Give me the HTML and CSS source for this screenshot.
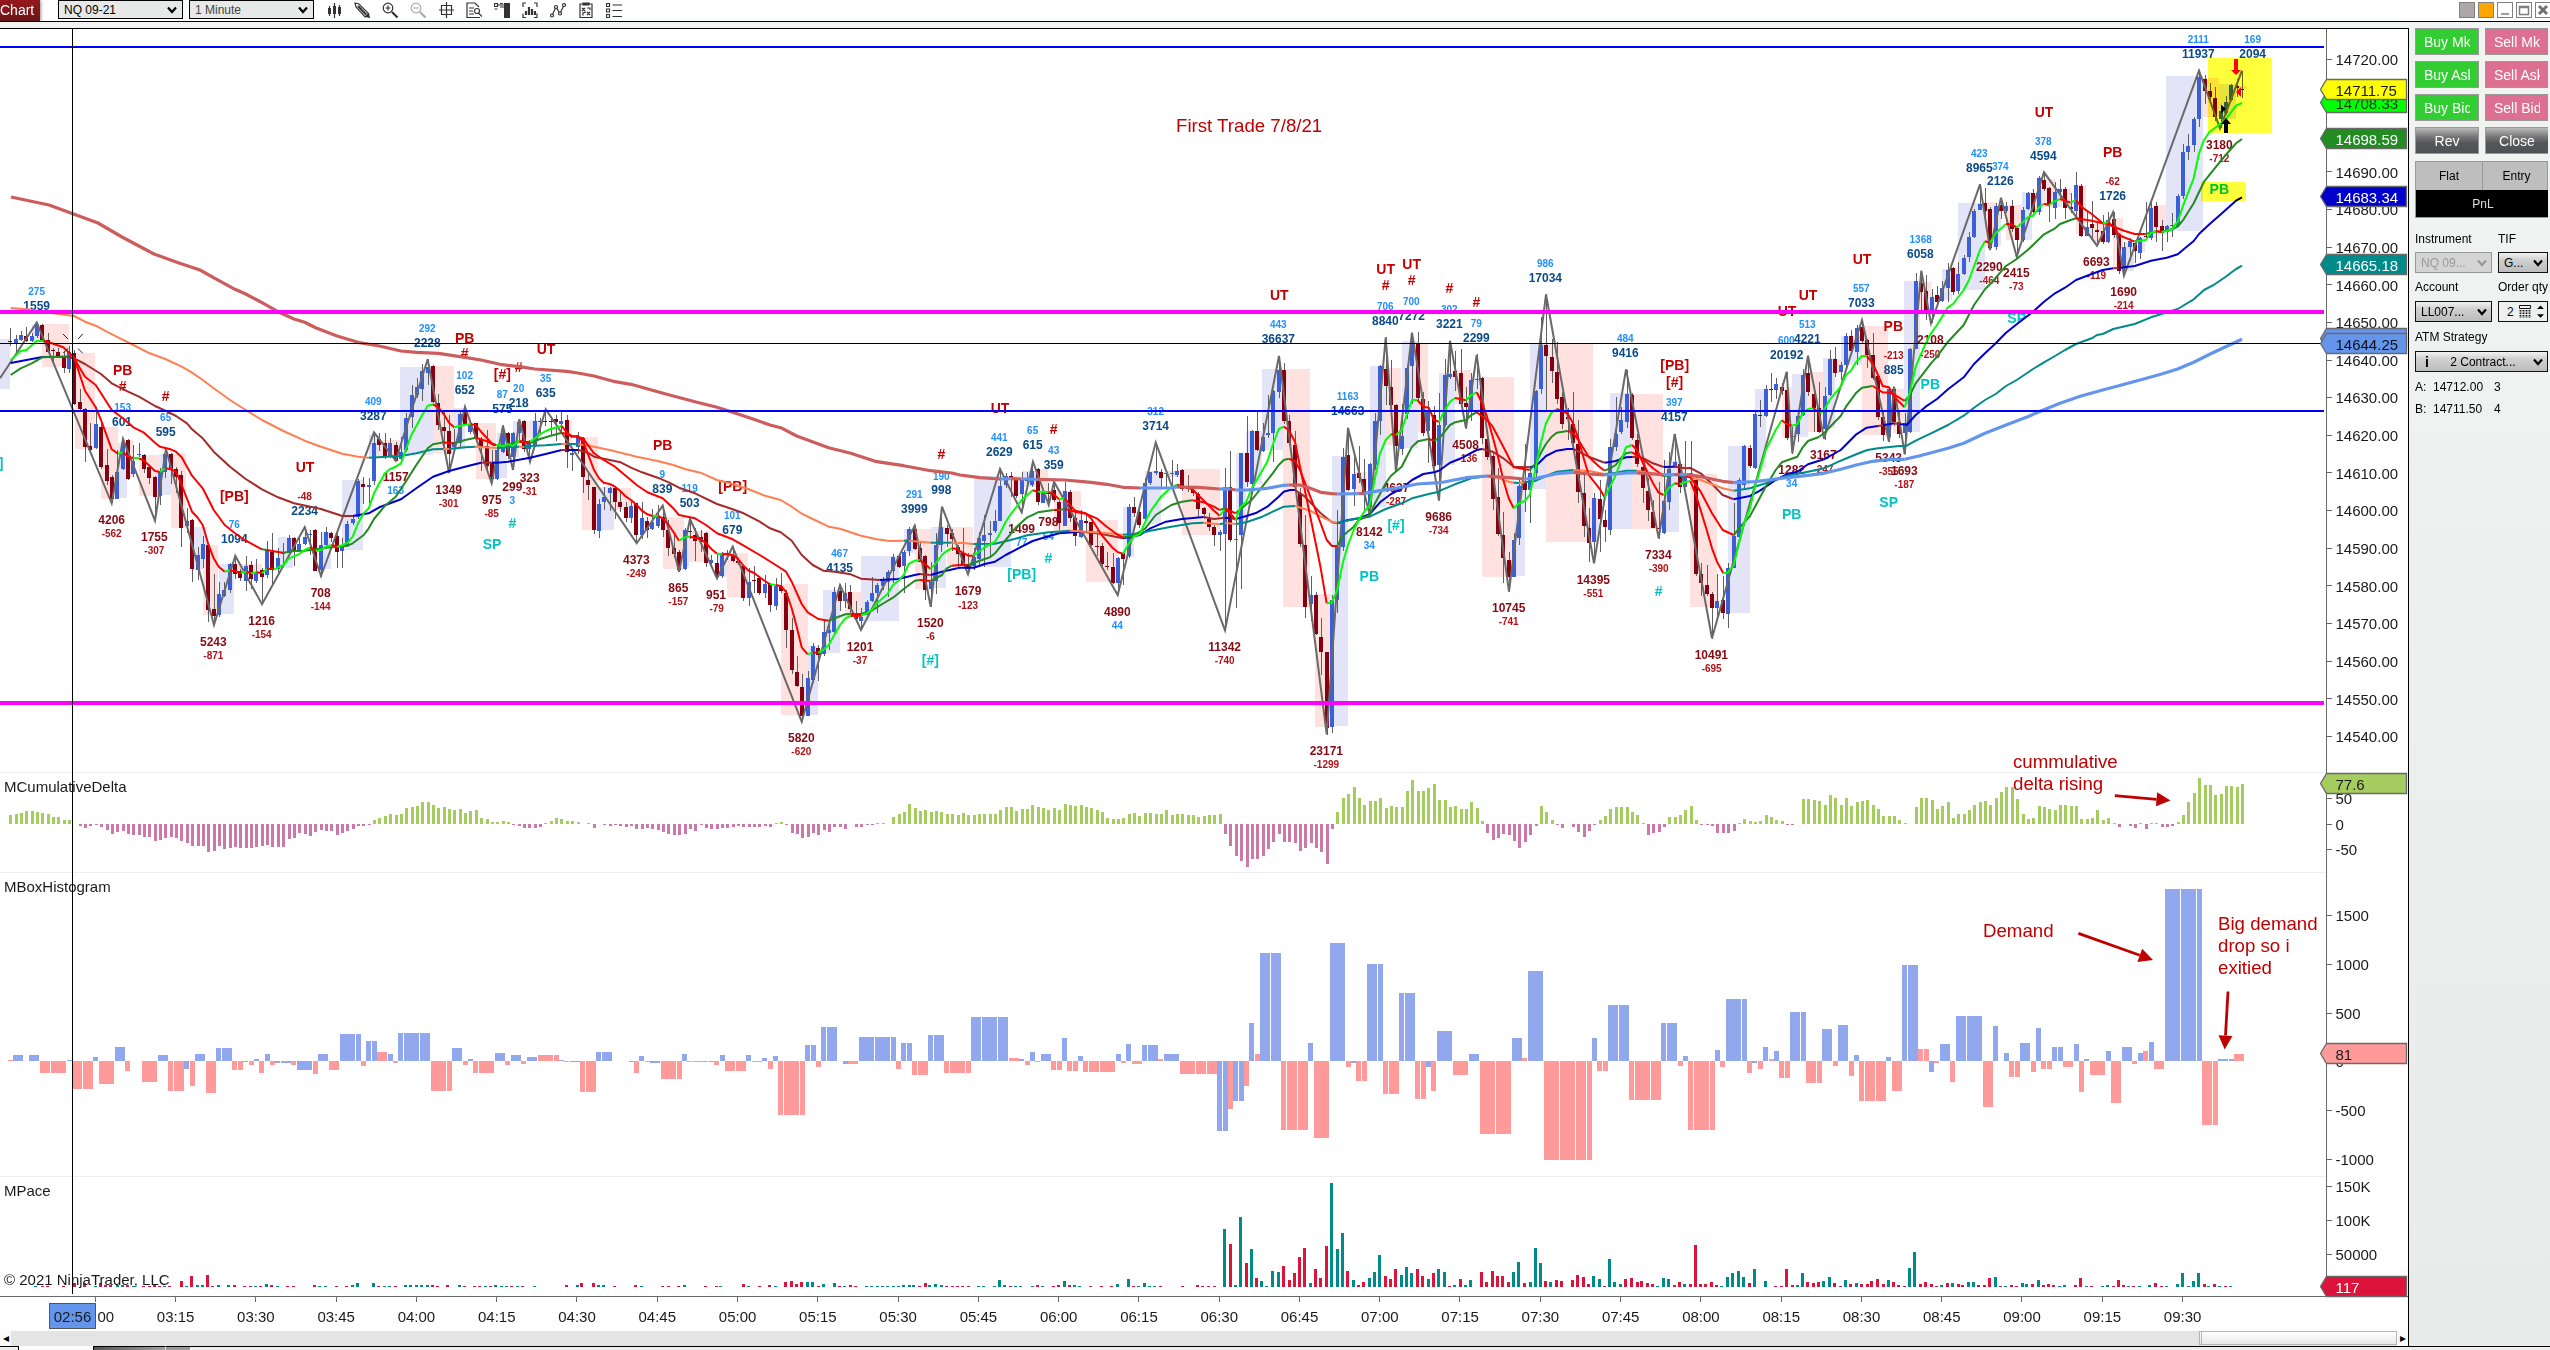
FILE: index.html
```html
<!DOCTYPE html>
<html lang="en">
<head>
    <meta charset="UTF-8">
    <meta name="viewport" content="width=device-width, initial-scale=1.0">
    <title>NQ 09-21 - Chart</title>
    <link rel="stylesheet" href="styles.css">
</head>
<body>
    <div class="window">
        <header class="toolbar">
            <div class="tab">Chart</div>
            <div class="select instrument">NQ 09-21<svg class="chev" viewBox="0 0 10 8"><path d="M1 1.5l4 4.5 4-4.5"/></svg></div>
            <div class="select interval">1 Minute<svg class="chev" viewBox="0 0 10 8"><path d="M1 1.5l4 4.5 4-4.5"/></svg></div>
            <div class="icons">
                <!-- bar style -->
                <svg viewBox="0 0 16 16"><path class="fill" d="M2 6h3v6H2zM7 4h3v8H7zM12 5h3v7h-3z"/><path d="M3.500 4v10M8.500 1v15M13.500 3v11"/></svg>
                <!-- drawing tools -->
                <svg viewBox="0 0 16 16"><path d="M1 1l4 1 9.500 9.500-3.500 3.500L2 5z"/><path class="thick" d="M4 4l8 8.500"/><path class="fill" d="M11 15l4-4 1 5z"/></svg>
                <!-- zoom in -->
                <svg viewBox="0 0 16 16"><circle cx="6" cy="6" r="4.800"/><path d="M3.500 6h5M6 3.500v5"/><path class="thick" d="M10 10l5.500 5.500"/></svg>
                <!-- zoom out -->
                <svg class="off" viewBox="0 0 16 16"><circle cx="6" cy="6" r="4.800"/><path d="M3.500 6h5"/><path class="thick" d="M10 10l5.500 5.500"/></svg>
                <!-- cross hair -->
                <svg viewBox="0 0 16 16"><path d="M3.500 3.500h10v9h-10zM8.500 0v16M1 8h15"/></svg>
                <!-- data box -->
                <svg viewBox="0 0 16 16"><path d="M14 15.500H1V1h8l4 4M3 6h5M3 9h4M3 12h5"/><circle cx="11" cy="9" r="2.500"/><path d="M12.500 11l3.500 3.500"/></svg>
                <!-- chart trader -->
                <svg viewBox="0 0 16 16"><path class="fill" d="M10 1h6v15h-6z"/><path d="M.5 1.500h3v3h-3zM.5 7h3M4 3h6M6 1.500h3M6 5h4"/></svg>
                <!-- indicators -->
                <svg viewBox="0 0 16 16"><path d="M4 1H1v4M12 1h3v4M4 15.500H1v-4M12 15.500h3v-4"/><path class="thick" d="M4 9v4M7 5v8M10 7v6M13 9v4"/></svg>
                <!-- strategies -->
                <svg viewBox="0 0 16 16"><path d="M2 13.500L6 5l4 6.500L14 3"/><circle class="dot" cx="2" cy="13.500" r="1.500"/><circle class="dot" cx="6" cy="5" r="1.500"/><circle class="dot" cx="10" cy="11.500" r="1.500"/><circle class="dot" cx="14" cy="3" r="1.500"/></svg>
                <!-- templates -->
                <svg viewBox="0 0 16 16"><path d="M2 2h12v13.500H2zM5 1h6v2H5zM4 6l3 3M7 6L4 9M9 6h3v2M5 13.500V11l3-1M9 10l3 3M12 10l-3 3"/></svg>
                <!-- properties -->
                <svg viewBox="0 0 16 16"><path d="M.5 1.500h3v3h-3zM.5 7h3v3h-3zM.5 12.500h3v3h-3zM6.500 3H16M6.500 8.500H16M6.500 14.500H16"/></svg>
            </div>
            <div class="window-buttons">
                <span class="wb grey"></span>
                <span class="wb orange"></span>
                <span class="wb"><svg viewBox="0 0 12 12"><path d="M2 10h8"/></svg></span>
                <span class="wb"><svg viewBox="0 0 12 12"><path d="M1.500 2.500h9v8h-9zM1.500 3.500h9"/></svg></span>
                <span class="wb"><svg viewBox="0 0 12 12"><path class="x" d="M2 2l8 8M10 2l-8 8"/></svg></span>
            </div>
        </header>

        <div class="main">
            <div class="chart-col">
                <svg id="chart" viewBox="0 29 2408 1302"></svg>
                <div class="scrollbar">
                    <span class="arrow">&#9666;</span>
                    <span class="thumb"></span>
                    <span class="arrow">&#9656;</span>
                </div>
            </div>

            <aside class="trader">
                <div class="orders">
                    <button class="buy"><span>Buy Mkt</span></button>
                    <button class="sell"><span>Sell Mkt</span></button>
                    <button class="buy"><span>Buy Ask</span></button>
                    <button class="sell"><span>Sell Ask</span></button>
                    <button class="buy"><span>Buy Bid</span></button>
                    <button class="sell"><span>Sell Bid</span></button>
                    <button class="dark"><span>Rev</span></button>
                    <button class="dark"><span>Close</span></button>
                </div>
                <div class="position">
                    <div>Flat</div>
                    <div>Entry</div>
                    <div class="pnl">PnL</div>
                </div>
                <div class="fields">
                    <label class="first">Instrument</label>
                    <label class="first">TIF</label>
                    <div class="box disabled">NQ 09...<svg class="chev" viewBox="0 0 10 8"><path d="M1 1.500l4 4.500 4-4.500"/></svg></div>
                    <div class="box">G...<svg class="chev" viewBox="0 0 10 8"><path d="M1 1.500l4 4.500 4-4.500"/></svg></div>
                    <label>Account</label>
                    <label>Order qty</label>
                    <div class="box">LL007...<svg class="chev" viewBox="0 0 10 8"><path d="M1 1.500l4 4.500 4-4.500"/></svg></div>
                    <div class="box qty">2
                        <svg class="calc" viewBox="0 0 12 13"><path class="screen" d="M.5.5h11v3H.5z"/><path d="M1.500 5v8M4.500 5v8M7.500 5v8M10.500 5v8"/></svg>
                        <svg class="spin" viewBox="0 0 8 14"><path d="M0 4l4-4 4 4zM0 10l4 4 4-4z"/></svg>
                    </div>
                    <label class="wide">ATM Strategy</label>
                    <div class="box wide atm"><b>i</b><span>2 Contract...</span><svg class="chev" viewBox="0 0 10 8"><path d="M1 1.500l4 4.500 4-4.500"/></svg></div>
                </div>
                <div class="quotes">
                    <span>A:</span><span>14712.00</span><span>3</span>
                    <span>B:</span><span>14711.50</span><span>4</span>
                </div>
            </aside>
        </div>

        <footer class="tabs">
            <span class="tab-left"></span>
            <span class="tab-active"></span>
            <span class="tab-idle"></span>
            <span class="tab-add"></span>
            <span class="tab-rest"></span>
        </footer>
    </div>

    <script src="chart.js"></script>
</body>
</html>
```
FILE: styles.css
```css
* {
    box-sizing: border-box;
}

body {
    margin: 0;
    font-family: "Liberation Sans", Arial, sans-serif;
    font-size: 12px;
    color: #000;
    background: #fff;
    overflow: hidden;
}

.window {
    width: 2550px;
    height: 1350px;
    display: flex;
    flex-direction: column;
}

/* toolbar */
.toolbar {
    display: flex;
    flex-shrink: 0;
    align-items: flex-start;
    height: 22px;
    border-bottom: 1px solid #000;
    overflow: hidden;
}

.tab {
    width: 40px;
    height: 21px;
    line-height: 20px;
    font-size: 14px;
    color: #fff;
    background: linear-gradient(#95191c, #6b1518);
    box-shadow: 1px 0 3px #999;
}

.select {
    position: relative;
    height: 19px;
    width: 125px;
    padding-left: 5px;
    line-height: 19px;
    border: 1px solid #000;
    background: #e7e9e8;
}

.instrument {
    margin-left: 18px;
}

.interval {
    margin-left: 6px;
    color: #444;
}

.chev {
    width: 10px;
    height: 8px;
    fill: none;
    stroke: #000;
    stroke-width: 2.2;
}

.select .chev {
    position: absolute;
    right: 5px;
    top: 5px;
}

.icons {
    display: flex;
    gap: 12px;
    margin: 2px 0 0 12px;
}

.icons svg {
    width: 16px;
    height: 16px;
    fill: none;
    stroke: #333;
    stroke-width: 1.2;
}

.icons .fill {
    fill: #333;
    stroke: none;
}

.icons .thick {
    stroke-width: 2.2;
}

.icons .dot {
    fill: #fff;
}

.icons .off {
    stroke: #aaa;
}

.window-buttons {
    display: flex;
    gap: 3px;
    margin: 2px -1px 0 auto;
}

.wb {
    width: 16px;
    height: 16px;
    padding: 1px;
    border: 1px solid #808080;
    background: #fff;
}

.wb svg {
    display: block;
    width: 12px;
    height: 12px;
    fill: none;
    stroke: #808080;
    stroke-width: 1.5;
}

.wb .x {
    stroke: #707070;
    stroke-width: 3;
}

.grey {
    background: #aca8a8;
}

.orange {
    background: #ffa500;
}

/* chart and side panel */
.main {
    flex: 1;
    display: flex;
    background: linear-gradient(#f2f3f3, #e9eaea);
    padding-top: 6px;
}

.chart-col {
    width: 2409px;
    display: flex;
    flex-direction: column;
    border-top: 1px solid #000;
    border-right: 1px solid #000;
    background: #fff;
}

#chart {
    display: block;
    flex-shrink: 0;
    width: 2408px;
    height: 1302px;
}

#chart text {
    font-family: "Liberation Sans", Arial, sans-serif;
}

.axis-text {
    font-size: 15px;
    fill: #1a1a1a;
}

.vol-high {
    font: bold 12px "Liberation Sans";
    fill: #0a4a88;
}

.vol-low {
    font: bold 12px "Liberation Sans";
    fill: #850a12;
}

.delta-pos {
    font: bold 10px "Liberation Sans";
    fill: #1e90ff;
}

.delta-neg {
    font: bold 10px "Liberation Sans";
    fill: #b01218;
}

.sig-red {
    font: bold 14px "Liberation Sans";
    fill: #c40000;
}

.sig-cyan {
    font: bold 14px "Liberation Sans";
    fill: #00c4c4;
}

.note {
    font-size: 18.67px;
    fill: #c00000;
}

.highlight {
    fill: #ffff3c;
    mix-blend-mode: multiply;
}

.scrollbar {
    display: flex;
    height: 15px;
    background: #e4e4e4;
}

.scrollbar .arrow {
    width: 11px;
    line-height: 14px;
    font-size: 12px;
    text-align: center;
    background: #fafafa;
}

.scrollbar .thumb {
    width: 198px;
    height: 14px;
    margin-left: auto;
    border: 1px solid #b5b5b5;
    border-left: 3px double #b5b5b5;
    background: linear-gradient(#fff, #e8e8e8);
}

.trader {
    margin-left: 6px;
    width: 133px;
    overflow: hidden;
}

.orders {
    display: grid;
    grid-template-columns: 64px 64px;
    gap: 6px;
}

.orders button {
    height: 27px;
    padding: 0 8px;
    border: 1px solid #999;
    font: 14px "Liberation Sans", Arial, sans-serif;
    color: #fff;
}

.orders span {
    display: block;
    overflow: hidden;
    white-space: nowrap;
}

.buy {
    background: #32cd32;
}

.sell {
    background: #dc6f92;
}

.dark {
    background: linear-gradient(#bbb, #777 35%, #55565a 60%, #505154);
}

.position {
    display: grid;
    grid-template-columns: 66px 68px;
    grid-template-rows: 28px 27px;
    margin-top: 7px;
    text-align: center;
    line-height: 28px;
    background: #bebebe;
    border: 1px solid #999;
}

.position div + div {
    border-left: 1px solid #999;
}

.position .pnl {
    grid-column: 1 / 3;
    border: 0;
    background: #000;
    color: #ddd;
}

.fields {
    display: grid;
    grid-template-columns: 77px 50px;
    grid-template-rows: 20px 21px 28px 21px 29px 21px;
    column-gap: 6px;
    margin-top: 14px;
}

.fields label {
    align-self: center;
    white-space: nowrap;
}

.fields .first {
    align-self: start;
}

.box {
    display: flex;
    align-items: center;
    justify-content: space-between;
    height: 21px;
    padding: 0 4px 0 5px;
    border: 1px solid #111;
    background: linear-gradient(#f2f2f2, #d0d0d0 35%, #bdbdbd);
}

.disabled {
    color: #999;
    border-color: #999;
    background: #d4d4d4;
}

.disabled .chev {
    stroke: #999;
}

.qty {
    padding: 0 3px 0 8px;
    background: #eef0f0;
}

.calc {
    width: 12px;
    height: 13px;
    fill: none;
    stroke: #111;
    stroke-dasharray: 1.6 0.9;
    stroke-width: 1.8;
}

.calc .screen {
    stroke-dasharray: none;
    stroke-width: 1;
}

.spin {
    width: 7px;
    height: 13px;
}

.wide {
    grid-column: 1 / 3;
}

.atm {
    padding-left: 9px;
}

.atm b {
    font-size: 14px;
}

.atm span {
    margin-left: 4px;
}

.quotes {
    display: grid;
    grid-template-columns: 18px 61px 20px;
    line-height: 22px;
    margin-top: 4px;
}

/* tab strip under the chart */
.tabs {
    display: flex;
    flex-shrink: 0;
    height: 4px;
    background: #eeefed;
}

.tab-left {
    width: 19px;
    border-top: 1px solid #000;
    border-right: 1px solid #000;
}

.tab-active {
    width: 74px;
    background: #fff;
}

.tab-idle {
    width: 73px;
    background: linear-gradient(90deg, #555, #a0a0a0);
    border-top: 1px solid #000;
    border-left: 1px solid #000;
    border-right: 1px solid #ddd;
}

.tab-add {
    width: 24px;
    background: #9a9a9a;
    border-top: 1px solid #000;
}

.tab-rest {
    flex: 1;
    border-top: 1px solid #000;
}
```
FILE: chart.js
```js
// Each tile holds a part of the price panel. x/y is the tile origin in pixels,
// all other numbers are in thirds of a pixel from there.
const tiles = [
    {
        x: 0, y: 270, first: 0,
        candles: `d174,212,216,228 u196,206,220,250 u184,194,210,215 d170,197,213,214 u190,197,213,218 u156,162,197,203 d162,165,212,215 d190,210,245,250
            d235,240,243,280 d235,245,256,262 d245,258,293,307 u228,245,296,308 d240,250,402,405 d357,395,416,420 d415,418,531,576 d460,528,540,548
            u410,461,533,535 d455,471,590,597 d537,585,632,645 d615,621,687,700 u540,606,686,687 u505,518,597,600 d508,510,627,630 u525,573,612,620
            u518,552,555,560 d553,555,597,610 d585,591,623,642 d618,621,681,752 u595,605,677,705 u535,553,608,625 d548,551,600,640 d590,597,621,667
            d603,615,773,830 u715,753,768,790 d748,750,896,938 u830,855,900,930 u798,822,866,895 d820,825,1020,1058 d913,1017,1037,1065 u936,972,1035,1040
            u935,960,977,980 u880,882,960,970 d857,882,912,925 d898,904,926,935 u858,888,933,962 d872,885,926,957 u868,905,933,940 d895,901,923,1003
            u813,841,917,925 d790,845,898,945 u835,863,895,920 u820,848,850,890 u795,804,850,855 d800,804,840,887 u800,822,840,845 u772,800,820,825
            u780,792,796,855 d778,780,903,905 u785,825,900,920 u772,786,826,830 d785,790,806,815 d790,798,846,895 u805,825,843,895 u752,762,825,830
            u738,747,760,765 u628,634,743,748 d620,642,651,700 u625,645,650,700 u487,520,635,645 d490,508,525,545 d488,520,560,565 u505,520,560,565
            d515,525,572,573 u500,545,565,570 u430,445,540,548 u345,375,440,475 u325,350,375,385 u283,303,357,395 u268,290,308,345 d285,288,395,400
            d372,400,467,480 d420,471,483,550 d435,483,552,608 u478,515,530,550 u420,432,520,530 d410,425,462,465 u455,465,487,490 d458,460,505,515
            d500,507,533,603 d480,528,587,600 d540,580,627,640 u525,540,627,630`,
        boxes: `b0,208,30,356 p127,163,206,291 b96,165,127,213 p225,248,286,537 p302,470,353,688 b353,518,382,685 p382,510,400,622 p417,554,480,678
            b480,553,512,675 p512,550,558,773 b577,770,620,900 p608,825,655,1035 b656,882,703,1032 p703,882,785,908 b833,802,880,893 b963,785,994,898
            b1025,631,1090,840 b1106,495,1138,560 p1138,510,1200,560 b1201,290,1298,555 p1298,287,1363,549 b1363,415,1395,540 p1395,425,1412,465 p1427,458,1488,627`,
        zig: '0,325 110,158 335,700 369,507 465,752 498,537 642,1065 706,857 786,1003 914,772 963,918 1122,487 1187,572 1283,268 1347,609 1395,410 1475,640',
        slow: 'i 33,-219 147,-195 294,-141 366,-99 462,-48 537,-21 600,0 650,28 705,58 737,72 786,98 834,125 882,147 914,157 947,173 1011,198 1074,217 1138,228 1203,243 1250,247 1315,250 1395,262 1443,270 1500,283',
        teal: 'o 32,114 80,118 160,130 222,138 255,155 287,167 320,185 354,202 400,225 449,250 496,267 545,290 576,308 608,330 641,355 690,390 737,420 786,450 850,483 914,512 963,530 1027,551 1074,560 1106,563 t 1203,558 1249,550 1299,538 1331,537 o 1347,537 t 1395,532 1427,530 o 1490,534',
        blue: 'b 32,279 95,267 127,261 206,260 w 222,265 255,282 303,312 335,340 384,365 417,380 465,408 496,422 528,438 561,460 576,478 608,505 641,545 690,590 737,627 786,658 834,682 882,700 963,717 1011,733 1027,738 1058,738 b 1106,730 1138,712 1203,688 1249,655 1299,620 1347,603 1395,590 1443,578 w 1475,578 b 1491,578',
        mid: 'f 32,315 62,295 95,280 127,262 206,260 r 222,265 255,320 287,345 303,370 335,420 369,445 400,472 432,488 465,518 480,530 512,538 528,545 545,562 576,617 608,655 641,720 674,765 705,790 737,812 786,838 f 801,840 r 834,846 850,848 f 882,843 914,842 947,838 963,835 1011,830 1043,827 1058,820 1091,795 1106,775 1122,747 1155,707 1187,680 1217,635 1249,585 1283,535 1299,523 1331,517 r 1347,520 1363,520 f 1395,510 1427,503 r 1459,513 1480,525 1491,525',
        fast: 'g 32,270 62,243 79,240 110,213 130,213 r 142,215 190,232 206,247 222,262 255,362 287,412 303,450 335,538 354,551 g 369,547 r 384,560 400,564 g 417,565 r 432,572 449,588 465,603 480,606 g 496,595 r 512,598 528,605 545,645 576,725 592,742 608,765 624,820 641,865 656,890 674,905 g 690,901 r 722,908 g 740,905 r 753,910 g 770,907 r 786,910 g 801,896 r 822,898 g 850,885 867,865 896,853 914,840 931,832 r 947,843 g 963,840 977,830 996,825 r 1011,830 g 1027,826 1043,818 1058,800 1074,760 1091,730 1106,715 1122,670 1138,640 1155,610 1170,597 1187,590 1203,580 1217,540 1234,495 1267,435 1283,407 1299,403 r 1315,412 1331,432 1347,458 1363,472 g 1395,464 1412,463 r 1427,465 1443,485 1475,520 1488,525',
        labels: 'p 110 65 275|H 110 106 1559|R 368 300 PB|R 368 348 #|p 368 412 153|H 366 455 601|R 497 378 #|p 497 443 65|H 497 485 595|L 335 748 4206|n 335 791 -562|L 463 800 1755|n 463 842 -307|R 703 679 [PB]|p 703 764 76|H 703 806 1094|L 640 1115 5243|n 640 1157 -871|L 785 1052 1216|n 785 1094 -154|R 915 591 UT|n 914 680 -48|H 914 722 2234|L 962 968 708|n 962 1010 -144|p 1120 395 409|H 1120 437 3287|L 1187 620 1157|p 1187 662 163|p 1282 176 292|H 1282 218 2228|R 1394 205 PB|R 1394 249 #|p 1394 317 102|H 1394 359 652|L 1346 659 1349|n 1346 701 -301|C 3 580 ]'
    },
    {
        x: 480, y: 300, first: 92,
        candles: `u375,400,456,460 d395,400,470,475 u395,400,473,510 u357,365,398,420 d360,363,446,455 u420,428,445,480 u338,363,438,440 u355,363,365,405
            d328,363,366,378 d350,363,366,405 d345,358,367,422 u335,362,370,398 d345,360,455,503 u445,458,465,513 u395,410,440,460 d410,414,530,578
            d515,541,555,600 d560,562,692,702 u598,612,692,714 u560,592,608,630 u560,563,579,633 d563,565,608,655 d575,605,621,635 d605,620,652,665
            u600,618,654,668 d608,610,705,730 u605,653,705,715 d650,662,690,712 u628,665,687,690 u615,648,678,685 d617,652,692,710 d660,690,743,768
            d705,743,760,775 d750,757,812,815 u685,690,808,812 d655,693,697,717 d685,705,724,785 d690,712,727,757 d697,699,788,802 u765,780,790,795
            d765,789,830,835 u755,760,830,832 u750,763,765,780 d738,765,782,787 d778,783,789,797 d795,798,893,902 u805,846,893,920 d798,840,842,880
            d830,834,879,885 u825,853,880,895 d850,853,917,938 u835,858,918,930 d820,858,872,880 d870,880,990,1045 d953,990,1109,1122 d1068,1116,1158,1162
            d1122,1161,1247,1265 u1113,1133,1247,1248 u1030,1038,1140,1150 d1035,1045,1065,1142 u963,996,1062,1068 u960,990,1000,1050 u860,875,995,1000 d853,873,903,935
            u850,878,903,925 d855,877,927,940 d902,940,957,960 u925,950,962,990 u900,905,943,945 u830,878,903,905 u850,855,880,940 u830,843,858,868
            u810,815,845,890 u762,770,812,850 d762,768,800,803 u750,755,797,880 u680,687,752,767 d675,687,747,750 d725,744,785,785 d765,768,870,900
            u785,845,867,920 u700,735,843,882 u620,682,735,755 d675,684,701,740 d688,699,717,755 d735,740,760,800 d685,760,795,800 d760,795,808,822`,
        boxes: `b50,400,82,534 b99,363,118,470 p118,363,150,440 b150,360,180,420 p260,360,275,450 p307,412,355,690 b355,562,403,690 p403,563,452,630
            p549,650,613,808 b613,690,628,800 p628,692,690,787 b711,757,740,830 p742,760,805,892 p902,853,983,1246 b983,1038,1013,1246 b1030,871,1079,1060
            p1096,875,1142,950 b1142,769,1256,962 b1271,687,1304,760 p1304,687,1352,868 b1352,680,1398,865 p1400,682,1480,795`,
        zig: '69,377 99,510 118,358 150,485 197,328 470,730 548,617 597,815 630,657 711,835 758,740 965,1265 1080,855 1143,990 1304,677 1352,920 1386,620 1464,823',
        slow: '118,200 165,207 260,214 293,219 342,228 405,245 453,253 533,275 580,288 645,305 711,322 758,337 821,358 870,375 902,383 950,408 1046,443 1112,460 1190,485 1271,497 1352,512 1415,519',
        teal: 't 118,440 o 132,441 t 150,438 197,436 245,432 o 260,432 t 295,432 o 342,440 389,450 422,458 470,470 533,483 580,495 614,507 661,518 711,540 758,552 806,568 855,587 902,600 935,620 965,641 998,657 1046,680 1080,686 1143,707 1190,718 1230,723 1271,722 t 1286,722 o 1352,728 t 1415,728 o 1430,730',
        blue: 'b 84,485 150,473 197,462 245,450 w 260,450 b 295,450 w 323,458 342,470 389,480 422,487 453,503 486,517 533,533 566,547 597,563 645,580 711,612 758,628 791,640 839,665 870,685 902,697 935,722 965,765 998,795 1030,812 1064,815 1112,823 1143,836 1200,840 b 1255,837 1304,825 1320,822 w 1352,825 b 1386,815 1432,805',
        mid: 'f 69,437 118,425 r 150,430 f 180,417 212,407 245,398 r 275,407 309,415 342,460 371,480 405,500 438,528 470,555 502,577 548,595 580,625 597,645 645,655 678,675 711,700 758,718 791,737 839,765 887,795 918,815 935,845 965,912 983,937 1015,957 1046,962 f 1064,955 1096,943 1112,942 r 1143,942 f 1175,932 1207,912 1239,893 1271,867 1304,842 1320,840 r 1352,843 f 1386,825 1400,805 1415,797',
        fast: 'g 69,438 84,433 99,437 118,422 r 132,426 150,426 g 165,415 180,403 197,393 212,387 245,378 r 260,397 275,410 293,408 309,425 323,460 342,510 357,535 371,548 389,552 405,560 420,572 438,590 453,600 470,615 486,632 502,643 518,648 g 535,648 r 548,655 566,675 580,695 597,722 g 614,712 630,710 r 661,717 678,730 695,748 711,761 g 726,763 r 742,762 758,766 773,775 791,798 806,812 821,818 839,832 855,843 870,853 g 887,855 r 902,858 918,875 935,925 950,980 965,1042 983,1063 g 998,1058 r 1015,1058 g 1030,1050 1046,1035 1064,1003 1080,975 1096,955 1112,948 r 1143,947 g 1160,940 1175,930 1190,910 1222,883 1239,855 1255,843 1271,825 1286,792 1304,782 1320,780 r 1338,795 1352,807 g 1367,790 1386,765 1400,753 1415,745 r 1432,747',
        labels: 'C 36 732 SP|R 67 222 [#]|p 67 284 87|H 67 326 575|R 116 201 #|p 116 266 20|H 116 308 218|R 198 147 UT|p 197 236 35|H 197 278 635|L 35 599 975|n 35 641 -85|L 97 559 299|p 97 602 3|C 97 669 #|L 149 533 323|n 149 575 -31|R 548 436 PB|p 547 524 9|H 547 567 839|p 629 566 119|H 629 608 503|R 758 559 [PB]|p 757 647 101|H 757 689 679|L 469 779 4373|n 469 821 -249|L 595 863 865|n 595 905 -157|L 708 884 951|n 710 926 -79|p 1079 761 467|H 1079 803 4135|L 964 1312 5820|n 964 1355 -620|L 1140 1040 1201|n 1140 1082 -37|p 1303 584 291|H 1303 626 3999|R 1384 463 #|p 1384 528 190|H 1384 570 998|L 1351 968 1520|n 1351 1010 -6|C 1351 1080 [#]|L 1464 872 1679|n 1464 915 -123'
    },
    {
        x: 960, y: 270, first: 180,
        candles: `u835,862,890,900 u785,803,867,885 u735,795,813,890 u752,790,797,860 u720,753,783,790 u595,648,752,755 u610,617,645,655 d605,618,623,680
            d625,630,678,685 u605,630,673,725 d605,628,633,640 u575,603,645,650 d595,597,696,705 u660,668,697,700 d640,670,673,705 d635,660,690,695
            d690,696,760,780 u637,663,767,770 d660,666,743,755 d720,745,798,827 u720,750,800,803 d735,752,757,785 d755,757,825,828 d780,827,831,857
            d818,828,881,887 d845,888,891,900 d850,891,938,942 u860,863,938,975 d845,850,867,945 u702,712,860,865 d680,711,728,740 d720,727,765,775
            u625,640,747,750 u605,607,640,643 u518,603,608,615 d598,605,623,655 u605,610,614,650 u570,608,612,650 u582,604,617,620 d598,601,657,665
            d615,653,656,665 d655,660,668,678 d665,671,717,740 d710,714,733,745 d730,747,772,783 d765,770,795,827 u780,787,797,843 u595,651,791,1080
            d543,651,810,815 u740,807,811,1013 u548,550,797,957 d437,548,635,650 u480,484,643,645 d427,484,540,545 u460,500,543,547 u375,490,495,505
            u360,364,490,575 u258,300,366,385 d278,300,453,460 d435,453,518,525 d483,525,650,655 d655,670,822,833 d735,825,1010,1043 u918,975,1003,1053
            d965,975,1092,1095 d1045,1100,1145,1215 d1145,1147,1375,1393 u975,990,1370,1390 u720,830,990,1028 u535,562,833,845 d475,555,660,665 u560,612,657,707
            d528,610,625,640 d567,627,670,720 u578,582,710,720 u430,454,585,600 u284,288,454,495 d200,297,348,403 d270,351,405,412 d402,405,527,605
            u403,497,537,555 u287,293,430,445 u188,212,288,400 d187,221,384,390 d365,387,489,497 u393,425,482,578 d408,435,587,590 u370,465,585,692
            u267,316,466,470 u212,312,320,325`,
        boxes: `b42,618,152,892 p152,618,185,675 b185,603,234,650 p234,597,265,690 p281,663,362,790 p377,751,473,937 b489,712,521,860 b555,602,602,762
            b620,602,652,620 p666,598,779,794 b827,548,857,755 b857,484,907,643 b907,297,972,541 p970,297,1051,1010 b1051,975,1065,1000 p1066,972,1115,1372
            b1115,559,1163,1369 p1181,607,1220,670 b1229,287,1277,710 p1277,295,1323,525 b1325,212,1373,535 p1373,220,1405,487 b1437,310,1485,585`,
        zig: '120,597 185,727 219,575 266,705 282,635 473,975 587,517 795,1081 957,258 1100,1393 1164,473 1229,735 1277,203 1308,605 1356,188 1437,692 1470,212',
        slow: '0,615 60,623 120,627 c 152,626 i 185,627 c 234,628 i 314,630 393,637 440,643 489,652 540,654 c 634,654 651,651 i 714,652 779,657 c 812,657 i 827,660 c 859,660 922,655 971,646 986,645 i 1020,645 1051,655 1082,667 1116,671 1132,672 c 1196,671 i 1213,670 c 1260,662 1325,652 1372,642 1437,638',
        teal: '0,818 40,822 t 105,821 152,810 202,796 266,787 330,782 o 410,787 489,794 t 540,790 571,782 634,770 697,760 731,758 o 779,763 t 795,759 o 827,762 t 859,757 907,740 938,725 971,710 1005,708 o 1051,722 1082,740 1116,755 1132,758 t 1181,748 1229,740 1277,717 1325,700 1356,685 1406,672 1437,665',
        blue: 'b 0,893 42,893 74,882 105,875 137,855 185,830 218,813 250,803 297,790 362,785 w 410,790 440,795 489,805 b 540,795 571,775 618,755 666,747 731,741 w 762,747 795,743 b 812,745 w 827,747 b 859,738 890,728 922,710 956,680 971,665 990,660 1005,660 w 1035,680 1051,697 1082,730 1116,757 1132,760 b 1164,750 1196,745 1229,733 1260,697 1293,672 1325,655 1356,630 1390,612 1422,607 1437,602',
        mid: 'r 0,885 25,885 f 57,873 90,862 105,850 137,810 170,770 202,742 234,727 281,720 r 297,720 f 314,717 r 345,725 377,731 410,745 440,770 474,795 489,802 f 521,797 556,775 587,735 634,705 666,695 697,691 r 731,697 762,710 779,720 f 795,715 r 827,730 f 842,717 859,703 875,690 907,650 938,610 956,585 971,570 986,566 r 1005,573 1020,600 1051,680 1082,760 1100,810 1116,828 1132,828 f 1148,798 1181,770 1196,750 1229,735 1245,700 1277,640 1293,617 1325,590 1340,560 1356,530 1374,514 1406,507 r 1422,512 f 1437,505',
        fast: 'r 0,843 25,857 40,857 g 57,845 74,832 105,815 120,790 137,755 152,733 185,690 218,661 r 234,665 g 266,666 r 281,673 297,688 g 314,685 r 330,705 345,722 377,730 393,745 425,795 459,835 474,847 489,851 g 507,820 521,800 540,792 556,755 571,725 603,680 634,652 651,644 r 666,649 697,658 714,675 762,722 779,737 g 795,717 r 812,732 827,750 g 842,710 859,695 875,655 890,630 922,575 938,525 956,477 971,470 r 986,480 1005,515 1020,590 1051,740 1067,820 1082,895 1100,1000 g 1115,998 1132,960 1148,880 1164,825 1181,780 1196,750 1213,725 1229,705 1245,625 1260,550 1277,510 1293,493 r 1308,495 g 1325,480 1340,435 1356,390 1372,390 r 1390,410 1406,413 1422,450 1437,455',
        labels: 'R 120 414 UT|p 118 503 441|H 118 545 2629|p 218 482 65|H 218 524 615|R 281 477 #|p 281 542 43|H 281 584 359|L 185 776 1499|p 185 818 77|C 185 911 [PB]|L 265 755 798|p 265 798 54|C 265 864 #|p 587 425 312|H 587 467 3714|L 472 1025 4890|p 472 1067 44|L 794 1130 11342|n 794 1172 -740|R 958 76 UT|p 955 164 443|H 955 206 36637|L 1099 1442 23171|n 1099 1484 -1299|p 1163 380 1163|H 1163 422 14663|L 1228 785 8142|p 1228 827 34|C 1228 918 PB|R 1277 -4 UT|R 1277 45 #|p 1276 110 706|H 1276 152 8840|R 1355 -19 UT|R 1355 30 #|p 1354 95 700|H 1355 137 7272|R 1468 55 #|p 1468 118 302|H 1468 160 3221|L 1308 654 4637|n 1308 695 -287|C 1308 765 [#]|L 1436 740 9686|n 1436 782 -734'
    },
    {
        x: 1440, y: 240, first: 270,
        candles: `d333,393,411,452 d327,399,491,497 d440,488,500,565 u400,420,513,545 u343,417,420,448 d410,414,595,612 d592,596,651,660 d640,648,777,810
            d685,771,881,890 d815,885,953,1028 d935,960,1010,1055 u880,900,1010,1012 u710,737,893,913 d612,723,750,815 u690,699,750,850 u450,453,700,710
            u230,315,447,460 d163,315,348,510 d297,351,392,430 d305,396,477,490 d455,471,552,565 d505,530,535,600 d455,552,608,630 d540,612,755,790
            d690,759,857,890 d805,863,908,968 u760,774,905,970 d720,777,837,935 d810,840,860,907 u597,621,870,885 u470,582,620,632 u500,540,576,582
            u390,462,545,565 d460,465,593,600 d582,600,671,680 d670,680,743,790 d715,752,808,845 d780,816,863,865 d725,864,867,895 u660,783,879,882
            u637,687,785,810 u582,666,680,685 d668,672,740,757 u603,708,740,742 u603,700,703,720 d710,720,1001,1008 d968,1003,1031,1068 d975,1035,1062,1067
            d1055,1063,1104,1195 u1003,1083,1104,1132 d1008,1080,1119,1138 u970,984,1122,1165 u790,887,983,985 u715,720,890,900 u615,618,735,743 d615,624,678,685
            u510,521,684,687 d480,524,528,560 u435,447,528,532 d400,446,450,488 u415,432,450,478 d430,441,452,465 d395,450,594,600 u560,587,590,640
            u520,528,582,607 u387,405,525,527 d347,399,455,467 d435,462,503,575 d427,504,576,580 u440,468,567,598 u330,357,465,467 d320,357,399,410
            u365,374,396,420 u278,288,374,380 d270,288,332,342 u255,264,336,375 d240,261,303,312 d298,300,345,385 d280,346,414,420 d405,408,530,540
            d515,530,585,602 u440,447,590,605 d440,447,546,558 d510,546,582,595 u520,548,578,643 u323,327,575,578 u100,123,327,328`,
        boxes: `p45,391,93,491 b93,415,125,513 p125,412,221,1010 b221,723,255,1008 b269,313,318,747 p317,313,460,907 b462,775,478,905 b510,460,575,867
            p575,463,670,868 b671,664,718,877 p718,672,735,740 p751,701,830,1102 b863,617,929,1120 b945,447,977,684 p1025,440,1057,592 b1057,403,1103,590
            p1103,397,1152,575 b1150,355,1184,565 p1185,357,1202,400 b1202,287,1265,375 p1265,258,1345,584 p1360,447,1393,580 b1393,122,1441,577 p1441,127,1472,213`,
        zig: '78,565 110,345 207,1055 318,163 462,970 558,388 656,895 704,582 816,1195 1040,395 1057,640 1104,347 1152,596 1266,240 1347,605 1362,440 1394,643',
        slow: 'c 0,728 78,713 141,708 i 206,713 254,717 c 288,715 350,701 400,697 i 446,702 494,705 c 558,699 590,699 i 671,704 c 704,704 i 719,703 c 740,704 i 782,710 848,724 881,728 c 945,725 1007,717 1072,710 1152,700 1202,688 1249,675 1298,664 1350,658 1394,658',
        teal: 't 0,752 45,733 94,715 141,709 o 174,713 206,725 221,728 t 237,729 o 254,727 t 288,722 318,708 350,695 400,690 o 446,693 494,702 t 527,698 558,692 590,692 o 639,700 671,708 t 704,704 751,712 o 782,720 816,733 848,745 881,752 t 930,745 977,730 1007,718 1040,708 1104,695 1152,685 1202,662 1249,643 1282,630 1314,625 1378,618 1394,618',
        blue: 'b 0,690 30,668 63,655 110,630 126,627 w 158,635 190,655 221,680 269,682 b 288,677 318,648 350,632 382,627 400,627 w 446,650 478,662 494,668 b 527,663 558,652 576,651 w 590,650 607,653 639,670 671,681 b 704,680 w 735,685 751,684 782,700 816,732 848,765 881,778 b 930,768 960,752 1007,720 1040,703 1072,695 1104,673 1152,658 1202,630 1249,583 1280,563 1314,558 w 1330,556 b 1362,550 w 1378,553 b 1394,553',
        mid: 'f 0,592 30,555 45,547 78,540 94,525 110,517 r 141,540 158,560 190,620 221,682 269,690 f 288,670 302,640 318,612 335,590 350,578 382,573 r 397,577 413,597 446,650 478,680 494,692 f 510,685 527,675 542,655 558,640 576,637 r 607,655 639,685 671,708 f 719,703 r 751,712 782,755 816,820 848,870 881,885 f 912,848 930,828 945,800 977,740 1007,690 1025,667 1072,650 1088,622 1104,603 1135,592 1152,580 1185,545 1202,528 1218,500 1249,458 1266,443 1298,438 r 1328,457 1347,458 1362,463 1394,483',
        fast: 'g 0,540 15,510 30,485 45,474 r 78,481 g 94,465 110,457 r 126,490 141,530 158,590 174,650 190,720 206,775 221,805 g 237,790 254,783 269,765 288,680 302,610 318,550 335,517 350,507 r 382,520 397,545 413,590 431,655 446,705 462,725 478,745 494,772 g 510,740 527,705 542,665 558,622 576,615 r 591,630 607,665 624,700 639,730 656,758 671,765 g 686,745 704,730 r 719,733 g 734,727 751,723 r 768,765 800,870 816,925 831,965 850,1000 g 863,998 881,975 897,910 912,850 930,805 945,740 960,690 977,630 1007,570 1025,541 r 1040,552 1055,557 g 1072,553 1088,520 1104,507 1120,505 r 1140,520 g 1152,510 1170,478 1202,440 1218,405 1232,393 1249,365 1266,348 1280,348 r 1298,370 1314,405 1328,438 1347,442 1362,470 1394,502',
        labels: 'R 109 187 #|p 109 251 79|H 109 293 2299|L 77 613 4508|n 82 656 -136|p 316 71 986|H 316 113 17034|L 206 1103 10745|n 206 1145 -741|p 556 296 484|H 556 338 9416|L 460 1019 14395|n 460 1061 -551|R 704 376 [PB]|R 704 427 [#]|p 703 488 397|H 703 530 4157|L 655 944 7334|n 656 986 -390|C 656 1053 #|L 814 1244 10491|n 815 1286 -695|R 1041 213 UT|p 1039 302 600|H 1040 344 20192|R 1104 165 UT|p 1102 254 513|H 1102 296 4221|L 1055 689 1282|p 1055 731 34|C 1055 822 PB|L 1150 645 3167|n 1150 687 -247|R 1266 58 UT|p 1264 146 557|H 1264 188 7033|R 1360 258 PB|n 1361 346 -213|H 1361 389 885|L 1346 652 5343|n 1346 694 -355|C 1346 787 SP|L 1393 692 1693|n 1393 734 -187|C 1471 432 PB|L 1471 300 2108|n 1471 342 -250'
    },
    {
        x: 1900, y: 20, first: 357,
        candles: `d752,789,815,870 d765,813,870,900 u808,830,870,910 d797,825,845,860 u783,803,842,845 u728,750,803,845 d740,744,815,825 u725,762,812,820
            u705,714,761,765 u635,651,711,725 u567,573,650,655 u493,552,570,572 d503,549,573,605 d560,567,685,690 u550,558,681,692 d533,556,573,597
            u545,558,573,577 d540,557,626,635 d618,623,659,710 u560,570,660,665 u515,519,568,570 d508,519,577,580 u467,474,576,583 d458,480,507,512
            d500,504,556,605 u487,516,563,597 u477,507,516,535 d500,507,563,597 d520,560,565,580 u457,495,573,595 d492,498,648,652 u577,622,648,650
            d543,612,624,662 d605,630,635,677 d585,633,665,672 u575,600,665,667 d577,597,645,655 d638,642,753,762 u665,681,741,765 u655,663,682,725
            d660,669,694,730 u650,654,698,717 d547,648,651,660 u545,564,654,658 d545,558,620,665 d600,618,639,692 u615,618,635,665 u580,615,619,653
            u523,528,617,620 u373,396,528,537 u342,378,396,420 u290,297,374,395 u150,171,297,322 d165,177,212,253 d190,213,230,240 d200,234,290,303
            u270,273,297,325 u227,246,280,285 u193,195,240,245 d177,198,204,230 d152,207,209,233`,
        boxes: `b125,748,157,840 p157,745,175,813 b173,549,254,809 p254,547,287,680 b287,557,303,678 p318,556,365,660 b365,517,397,660 p399,519,417,570
            b415,470,430,575 p430,478,465,560 b465,505,487,560 p495,505,512,560 p528,495,558,643 b560,622,575,648 p575,612,623,665 p639,594,670,745
            b672,665,702,752 b718,652,736,697 b750,560,768,655 p770,556,798,635 b799,169,909,633 p909,175,958,290 b958,192,1008,297 p1008,197,1040,207`,
        zig: '64,752 93,910 240,493 270,690 303,533 350,710 432,457 591,677 639,577 672,767 897,152 960,325 1026,152',
        slow: 'c 60,1307 144,1285 191,1270 255,1240 318,1215 383,1190 430,1170 480,1150 543,1128 608,1110 656,1097 720,1080 785,1062 833,1047 881,1027 929,1003 977,980 1026,958',
        teal: 't 20,1277 47,1262 93,1240 144,1215 191,1187 222,1163 255,1140 287,1122 318,1098 350,1080 399,1047 432,1027 465,1008 495,990 528,972 575,955 591,945 608,942 640,927 704,912 753,892 833,867 881,838 912,810 944,793 977,770 1008,747 1026,737',
        blue: 'b 20,1215 47,1185 77,1160 111,1137 144,1108 191,1072 222,1032 255,1000 287,970 318,938 350,913 399,875 432,845 465,820 495,803 528,780 575,762 608,750 640,745 w 656,744 b 704,738 753,722 800,713 833,703 881,663 897,642 929,612 960,585 1008,542 1026,532',
        mid: 'f 30,1125 47,1090 93,1030 111,1010 144,965 191,915 222,855 255,808 270,793 303,755 318,738 350,717 383,690 399,675 432,643 465,625 480,612 512,600 528,595 r 575,602 608,610 623,612 645,622 672,632 704,642 737,642 f 753,638 770,634 r 785,636 f 815,628 833,620 848,602 881,550 912,485 944,445 977,405 1008,370 1026,357',
        fast: 'g 30,1115 47,1040 64,1000 77,970 93,940 111,915 144,862 159,852 191,810 207,780 240,690 255,664 r 270,668 g 287,640 318,612 r 335,613 350,622 g 365,610 383,592 399,587 417,562 432,551 r 447,555 g 465,543 480,537 r 512,548 g 528,540 r 543,560 575,582 608,610 g 625,607 r 645,625 656,645 704,665 g 737,660 753,638 768,634 r 785,636 g 800,633 815,628 833,605 848,560 881,475 897,400 912,360 929,335 960,313 977,298 1008,257 1026,249',
        labels: 'p 62 659 1368|H 61 701 6058|p 238 401 423|H 238 443 8965|p 301 440 374|H 301 482 2126|R 432 276 UT|p 430 365 378|H 430 407 4594|R 638 396 PB|n 638 485 -62|H 638 527 1726|L 268 740 2290|n 268 782 -464|L 349 758 2415|n 349 800 -73|C 350 893 SP|L 589 725 6693|n 589 767 -119|L 671 815 1690|n 671 857 -214|p 895 59 2111|H 895 101 11937|p 1058 59 169|H 1058 101 2094|L 958 374 3180|n 958 416 -712|C 958 507 PB'
    }
];

// cumulative delta, one value per bar; the scale changes at bar 219
const deltaA = [24,26,30,34,34,32,29,26,19,19,11,11,0,-4,-11,-5,-3,-9,-17,-27,-21,-19,-27,-29,-29,-34,-35,-45,-43,-38,-35,-37,-45,-51,-59,-59,-59,-75,-72,-59,-67,-64,-61,-64,-64,-64,-61,-59,-57,-60,-61,-60,-40,-37,-24,-27,-32,-20,-17,-19,-19,-28,-24,-19,-12,-4,-4,-3,
    11,16,21,26,24,26,42,45,48,58,58,50,42,45,40,37,40,29,34,37,16,13,5,5,8,5,-3,-5,-11,-11,-11,-8,3,8,16,13,8,8,5,0,3,-11,0,-3,-5,-3,-5,-8,-5,-13,-13,-11,-13,-16,-21,-27,-29,-29,-27,-13,-19,-3,-11,-13,-13,-11,-11,-8,-5,-8,-8,-8,-8,-5,-8,3,5,-3,-24,-27,-37,-35,-24,-29,-16,-21,-8,-8,-13,0,-8,-8,-3,-3,3,3,0,
    19,26,32,53,42,34,37,32,34,32,26,26,24,29,24,24,26,26,26,26,37,45,45,34,40,40,50,45,42,37,42,37,53,50,48,50,45,42,37,32,16,13,13,16,26,29,21,29,29,26,26,37,24,26];
const deltaB = [25,22,22,18,21,22,22,25,-26,-56,-82,-95,-110,-90,-90,-82,-64,-46,-26,-45,-45,-49,-70,-62,-49,-62,-72,-103,-13,32,68,76,94,68,50,58,58,66,40,45,43,43,84,112,84,86,92,102,61,61,43,45,38,38,56,40,7,-23,-41,-36,-26,-28,-43,-62,-46,-28,-5,45,32,9,-2,-10,0,-8,-20,-33,-19,-2,11,20,38,43,43,43,32,22,2,-28,-22,-20,-7,17,19,22,36,45,9,-2,-2,-5,-23,-23,-23,-18,2,14,7,4,8,22,17,9,8,-2,-2,0,
    63,63,61,58,50,74,66,50,66,45,56,58,61,50,38,20,20,20,11,2,0,43,68,68,61,38,45,56,15,25,25,36,50,56,58,48,68,82,94,94,63,25,12,15,45,43,38,35,50,48,45,45,12,12,15,35,9,15,2,-8,0,-5,-10,2,-13,2,2,-8,-8,-5,5,22,56,79,117,99,99,74,77,97,97,94,102];

// box histogram: color, first bar, number of bars, height
const histA = 'p0,1,3 b1,2,16 b4,2,16 p6,5,-32 b11,1,3 p12,4,-74 b16,1,11 p17,3,-61 b20,2,37 p22,1,-27 p25,3,-56 b28,2,16 p30,3,-80 b33,1,-21 p34,1,-66 b35,2,19 p37,2,-85 b39,3,35 p42,2,-24 b44,1,-3 p45,1,-11 b46,1,5 p47,1,-32 b48,1,19 p49,1,-11 b50,3,-5 p53,1,-11 b54,3,-24 p57,1,-34 b58,2,19 p60,2,-24 b62,4,72 p66,1,-13 b67,2,53 p69,2,24 b71,1,19 p72,1,-5 b73,6,74 p79,4,-80 b83,2,35 p85,1,-11 b86,1,5 p87,4,-32 b91,2,21 p93,1,-11 b94,2,16 p96,1,-8 b97,2,11 p99,4,16 b103,1,3 p104,1,-3 b105,2,-3 p107,3,-82 b110,3,24 b116,1,-3 p117,1,-32 b118,1,13 p119,1,-3 b120,2,-5 p122,4,-48 b126,1,19 p127,4,-3 b131,1,-3 p132,1,-11 b133,1,16 p134,4,-27 b138,1,16 p139,2,-3 b141,1,8 p142,1,-21 b143,1,13 p144,5,-143 b149,2,43 p151,1,-16 b152,3,90 b156,1,-8 p157,2,-8 b159,7,64 p166,1,-21 b167,2,48 p169,3,-37 b172,3,69 p175,5,-32 b180,7,117 p187,2,8 b189,1,5 p190,1,-11 b191,1,24 p192,1,-3 b193,2,19 p195,2,-24 b197,1,61 p198,2,-27 b200,1,13 p201,6,-29 b207,1,19 p208,1,-5 b209,1,45 p210,2,-8 b212,3,43 p215,1,5 b216,3,19';
const histB = 'p219,7,-34 b226,2,-180 p228,1,-124 b229,2,-103 p231,1,-64 b232,1,98 p233,1,18 b234,4,277 p238,5,-177 b243,1,46 p244,3,-198 b247,3,303 p250,1,-15 b251,1,-5 p252,2,-52 b254,3,249 p257,3,-85 b260,3,175 p263,2,-98 b265,1,-15 p266,1,-77 b267,3,77 p270,3,-36 b273,2,18 p275,6,-188 b281,2,59 p283,1,8 b284,3,231 p287,9,-255 b296,1,59 p297,2,-26 b299,4,144 p303,6,-100 b309,3,98 p312,1,-13 b313,1,13 p314,5,-177 b319,1,28 p320,1,-15 b321,4,159 p325,1,-31 b326,1,-5 p327,1,-21 b328,1,36 p329,1,5 b330,1,26 p331,2,-44 b333,3,126 p336,3,-57 b339,2,82 p341,1,-13 b342,2,92 p344,1,-39 b345,1,15 p346,5,-103 b351,1,10 p352,2,-77 b354,3,247 p357,2,31 b359,1,-28 p360,1,-5 b361,2,44 p363,1,-54 b364,5,116 p369,2,-118 b371,1,90 b373,1,20 p374,2,-41 b376,2,46 p378,1,-28 b379,1,85 p380,2,-21 b382,2,36 p384,2,-15 b386,1,44 p387,1,-80 b388,1,5 p389,3,-36 b392,1,26 p393,2,-108 b395,2,36 p397,1,-8 b398,1,20 p399,1,26 b400,1,49 p401,2,-21 b403,7,442 p410,3,-165 b413,3,5 p416,2,18';

// pace: x, color, height
const paceA = '47t3 55r3 62r3 83r3 97r11 110r11 125t3 131r11 138r6 145r5 153t4 160t4 167r5 174t3 188r3 195r3 202r6 209r3 215t3 222r3 237r16 244t3 250r30 258t6 264t4 271r32 278r3 285t4 299t6 306r4 320r3 327r3 334t3 341r3 348t8 355r6 362t3 376r3 383r3 411r6 418t3 425t3 440r3 453r3 460t4 467t11 488t11 495r3 502t3 509t3 517r3 530t6 537t6 544t4 551t6 558t4 565r6 572r3 585r5 600t6 607r3 620r3 627r3 634t3 641r3 648t6 655t3 662t3 669r3 676t3 683r3 698t3 740r6 754t4 760r11 775r11 782t6 789t4 803r3 831r6 838t3 866r3 873r3 887r3 894t6 922r3 936r3 942t3 971r8 978t3 992r3 1006r6 1013t3 1026r14 1034r16 1041r8 1047r14 1055t14 1062t14 1069r3 1076t8 1090t11 1097r3 1104t3 1111r6 1118r3 1132t3 1139t3 1146t3 1153t3 1160t3 1167t3 1174t3 1181t6 1188t6 1194t4 1202r3 1209r11 1215t4 1222t8 1230t6 1237r3 1244r3 1251r3 1258r3 1265r3 1278t3 1285t3 1299t3 1306t19 1313t5 1320r3 1327t3 1334t3 1349t3 1356r6 1362t3 1376r3 1383r6 1391t16 1398r6 1404t6 1411t3 1425r3 1439r3 1453r3 1460t8 1474t22 1481r3 1488t3 1495t11 1502t3 1509t3 1516r3';
const paceB = '3r3 22r5 29r3 36r3 43r3 56t149 64r110 70t5 77t180 84r62 91t98 97r23 103t15 110t3 117t41 124t38 131r54 138r18 145r36 151r77 157r100 165t10 171r46 178r23 185r105 191t267 199t98 206t139 212r41 219t18 226r5 232r13 240t23 246t38 252t82 260r28 266r20 272r45 280t31 286t51 293t36 300r46 307r28 314t20 320r36 327t46 334t38 341r3 347t5 355r20 361t5 367t18 381r38 388r13 395r41 401r28 408r28 415r13 422t38 428t64 436r10 443t13 449t100 456t62 462r15 469t13 476r18 482r15 496r18 503r32 510r26 517r8 523t28 530t20 537r3 543t72 550t13 557t8 563r20 571r23 578r13 584r15 591r10 597r8 604t3 611t23 618t20 625r5 632r13 638t8 645r8 652r108 658r8 665r8 672r13 679r5 685t3 692t26 699t36 706t41 712t26 720r10 726t46 740t15 753r3 760r3 767r46 774r5 781t5 787t36 794r13 801r10 808r13 814t15 821t26 828r10 835r3 841t18 848r8 855t10 862r8 869r8 875r15 882r21 889r8 896t18 902r13 909r5 916r3 922t49 929t90 936r8 943r13 950r8 957r3 963t5 970r10 977t10 984r8 990r5 997t13 1003t13 1010r5 1017r5 1024r23 1031t26 1037r3 1044t3 1051r5 1058r3 1065t10 1071t8 1078r8 1085t18 1092r5 1098r8 1105r5 1112t3 1119t5 1132r5 1139r23 1146t3 1153r3 1166t3 1173t5 1180r3 1187r18 1193r5 1200t3 1206r3 1213t3 1226t5 1233r10 1241r3 1247t3 1261t8 1268t36 1275t3 1281t15 1288t36 1295r8 1301t3 1308r8 1315t3 1322r3 1328t3';

const colors = {
    g: '#00ff00', r: '#ff0000', f: '#228b22', b: '#0000cd', w: '#a52a2a',
    t: '#008b8b', o: '#ff7f50', c: '#6495ed', i: '#cd5c5c'
};
const labelStyles = {
    H: ['vol-high', 4.3], L: ['vol-low', 4.3], p: ['delta-pos', 3.6],
    n: ['delta-neg', 3.6], R: ['sig-red', 5], C: ['sig-cyan', 5]
};
const STEP = 5.352;
const barX = i => 10.7 + STEP * i;

const svg = document.getElementById('chart');

function add(name, attrs, text) {
    const el = document.createElementNS('http://www.w3.org/2000/svg', name);
    for (const k in attrs) el.setAttribute(k, attrs[k]);
    if (text !== undefined) el.textContent = text;
    svg.appendChild(el);
    return el;
}

function rect(x, y, w, h, fill) {
    add('rect', { x, y, width: w, height: h, fill, 'shape-rendering': 'crispEdges' });
}

function line(x1, y1, x2, y2, stroke, w) {
    add('line', { x1, y1, x2, y2, stroke, 'stroke-width': w || 1 });
}

const split = s => s.trim().split(/\s+/);

// panel separators
rect(0, 772, 2326, 1, '#eeeeee');
rect(0, 872, 2326, 1, '#eeeeee');
rect(0, 1176, 2326, 1, '#eeeeee');

// trend boxes
tiles.forEach(t => split(t.boxes).forEach(b => {
    const [x1, y1, x2, y2] = b.slice(1).split(',').map(Number);
    rect(t.x + x1 / 3, t.y + y1 / 3, (x2 - x1) / 3, (y2 - y1) / 3, b[0] === 'b' ? '#e4e4f8' : '#ffe2df');
}));

// candles
tiles.forEach(t => split(t.candles).forEach((c, n) => {
    const [hi, top, bot, lo] = c.slice(1).split(',').map(v => t.y + v / 3);
    const x = Math.round(barX(t.first + n) - 0.5);
    rect(x, Math.round(hi), 1, Math.round(lo - hi), '#606060');
    rect(x - 2, Math.round(top), 4, Math.max(1, Math.round(bot - top)), c[0] === 'u' ? '#3a5fd6' : '#850010');
}));

// volume, delta and signal texts
tiles.forEach(t => t.labels.split('|').forEach(l => {
    const [kind, x, y, text] = l.split(' ');
    add('text', { class: labelStyles[kind][0], x: t.x + x / 3, y: t.y + y / 3 + labelStyles[kind][1], 'text-anchor': 'middle' }, text);
}));

// swing line
const zig = tiles.map(t => split(t.zig).map(p => {
    const [x, y] = p.split(',');
    return (t.x + x / 3).toFixed(1) + ',' + (t.y + y / 3).toFixed(1);
}).join(' ')).join(' ');
add('polyline', { points: zig, fill: 'none', stroke: '#696969', 'stroke-width': 2 });

// moving averages, a letter starts a new colour
function average(key, width) {
    let color = null, run = [], last = null;
    const flush = () => {
        if (run.length > 1) add('polyline', { points: run.join(' '), fill: 'none', stroke: color, 'stroke-width': width, 'stroke-linejoin': 'round' });
    };
    tiles.forEach(t => split(t[key]).forEach(tok => {
        if (colors[tok]) {
            flush();
            color = colors[tok];
            run = last ? [last] : [];
            return;
        }
        const [x, y] = tok.split(',');
        last = (t.x + x / 3).toFixed(1) + ',' + (t.y + y / 3).toFixed(1);
        run.push(last);
    }));
    flush();
}
average('blue', 2);
average('teal', 2);
average('mid', 2);
average('fast', 2);
average('slow', 3.2);

// horizontal levels
rect(0, 46, 2324, 2, '#0000ff');
rect(0, 310, 2324, 4, '#ff00ff');
rect(0, 410, 2324, 2, '#0000ff');
rect(0, 701, 2324, 4, '#ff00ff');

// cumulative delta
deltaA.concat(deltaB).forEach((v, i) => {
    const h = Math.round(Math.abs(v) / (i < 219 ? 2.658 : 2.57));
    if (h) rect(Math.round(barX(i) - 1.5), v > 0 ? 824 - h : 824, 3, h, v > 0 ? '#a5cc5f' : '#cb79a9');
});

// box histogram
function histogram(data, scale) {
    split(data).forEach(d => {
        const [from, n, v] = d.slice(1).split(',').map(Number);
        const h = Math.max(1, Math.round(Math.abs(v) / scale));
        for (let i = from; i < from + n; i++) {
            rect(Math.round(barX(i) - 3), v > 0 ? 1061 - h : 1061, 5, h, d[0] === 'b' ? '#91a8ee' : '#ff9a9a');
        }
    });
}
histogram(histA, 2.658);
histogram(histB, 2.57);

// pace
function pace(data, x0, sx, sy) {
    split(data).forEach(d => {
        const [, x, c, v] = d.match(/(\d+)([rt])(\d+)/);
        const h = Math.round(v / sy);
        rect(Math.round(x0 + x / sx - 1.5), 1287 - h, 3, h, c === 'r' ? '#dc143c' : '#008b8b');
    });
}
pace(paceA, 0, 1.3067, 2.658);
pace(paceB, 1180, 1.2645, 2.57);

// panel names
[['MCumulativeDelta', 792], ['MBoxHistogram', 892], ['MPace', 1196], ['© 2021 NinjaTrader, LLC', 1285]].forEach(([s, y]) => {
    add('text', { class: 'axis-text', x: 4, y }, s);
});

// price axis
rect(2326, 29, 1, 1266, '#696969');
function axisLabel(y, s) {
    rect(2327, Math.round(y), 5, 1, '#696969');
    add('text', { class: 'axis-text', x: 2335.5, y: y + 6.3 }, s);
}
for (let p = 14720; p >= 14540; p -= 10) {
    // 14710 and 14700 lie completely under the value tags
    if (p !== 14710 && p !== 14700) axisLabel(58.5 + (14720 - p) * 3.763, p.toFixed(2));
}
[[797.5, '50'], [823.5, '0'], [849, '-50'], [914.5, '1500'], [963.5, '1000'], [1012.5, '500'], [1061, '0'],
    [1109.5, '-500'], [1158.5, '-1000'], [1186, '150K'], [1219.5, '100K'], [1253.5, '50000']].forEach(([y, s]) => axisLabel(y, s));

// time axis
rect(0, 1296, 2408, 1, '#696969');
for (let i = 16; i <= 406; i += 15) {
    const min = 164 + i;
    const label = '0' + Math.floor(min / 60) + ':' + String(min % 60).padStart(2, '0');
    rect(Math.round(barX(i) - 1.6), 1297, 1, 5, '#696969');
    add('text', { class: 'axis-text', x: barX(i) - 1, y: 1322, 'text-anchor': 'middle' }, label);
}

// cross hair
rect(72, 29, 1, 1265, '#000');
rect(0, 343, 2322, 1, '#000');
line(63, 334, 68, 339, '#222');
line(82.7, 334, 78, 339, '#222');
line(63.3, 352.7, 68.3, 348.5, '#222');
line(78, 348.5, 82.7, 353.3, '#222');
add('rect', { x: 49.5, y: 1303.5, width: 46, height: 25, fill: '#6495ed', stroke: '#555' });
add('text', { class: 'axis-text', x: 72.5, y: 1322, 'text-anchor': 'middle' }, '02:56');

// value tags
function tag(y, fill, textFill, s) {
    add('path', { d: `M2320.5 ${y + 10}L2326.5 ${y}H2406.5V${y + 20}H2326.5Z`, fill, stroke: '#696969', 'stroke-width': 1.3 });
    if (s) add('text', { class: 'axis-text', x: 2335.5, y: y + 16, style: `fill:${textFill}` }, s);
}
tag(92.5, '#00ff00', '#1a3a1a', '14708.33');
tag(79.5, '#ffff00', '#1a1a1a', '14711.75');
tag(128.5, '#228b22', '#fff', '14698.59');
tag(186.5, '#0000cd', '#fff', '14683.34');
tag(254.5, '#008b8b', '#fff', '14665.18');
tag(328.5, '#6495ed', '#fff', '');
tag(333.5, '#6495ed', '#111', '14644.25');
tag(773.5, '#a5cc5f', '#1a1a1a', '77.6');
tag(1043.5, '#ff9a9a', '#1a1a1a', '81');
tag(1276.5, '#dc143c', '#fff', '117');

// trade markers
add('path', { d: 'M2234 59h4v11h3l-5 5-5-5h3z', fill: '#ff0040' });
add('path', { d: 'M2236 92l5-5v10z', fill: '#ff0040' });
add('path', { d: 'M2226 109l-5-4.500v9z', fill: '#000050' });
add('path', { d: 'M2224 133h4v-9h3l-5-6-5 6h3z', fill: '#000040' });
add('rect', { class: 'highlight', x: 2208, y: 58, width: 64, height: 75 });
add('rect', { class: 'highlight', x: 2201, y: 182, width: 45, height: 19 });

// notes
[['First Trade 7/8/21', 1176, 132], ['cummulative', 2013, 768], ['delta rising', 2013, 790], ['Demand', 1983, 937],
    ['Big demand', 2218, 930], ['drop so i', 2218, 952], ['exitied', 2218, 974]].forEach(([s, x, y]) => {
    add('text', { class: 'note', x, y }, s);
});

function arrow(x1, y1, x2, y2) {
    const a = Math.atan2(y2 - y1, x2 - x1), c = Math.cos(a), s = Math.sin(a);
    const bx = x2 - 14 * c, by = y2 - 14 * s;
    line(x1, y1, bx, by, '#c00000', 2.8);
    add('polygon', { points: `${x2},${y2} ${bx - 7 * s},${by + 7 * c} ${bx + 7 * s},${by - 7 * c}`, fill: '#c00000' });
}
arrow(2114.8, 795.6, 2170.5, 800.5);
arrow(2078.4, 933.4, 2153, 960);
arrow(2228, 991.5, 2224.7, 1049.5);
```
